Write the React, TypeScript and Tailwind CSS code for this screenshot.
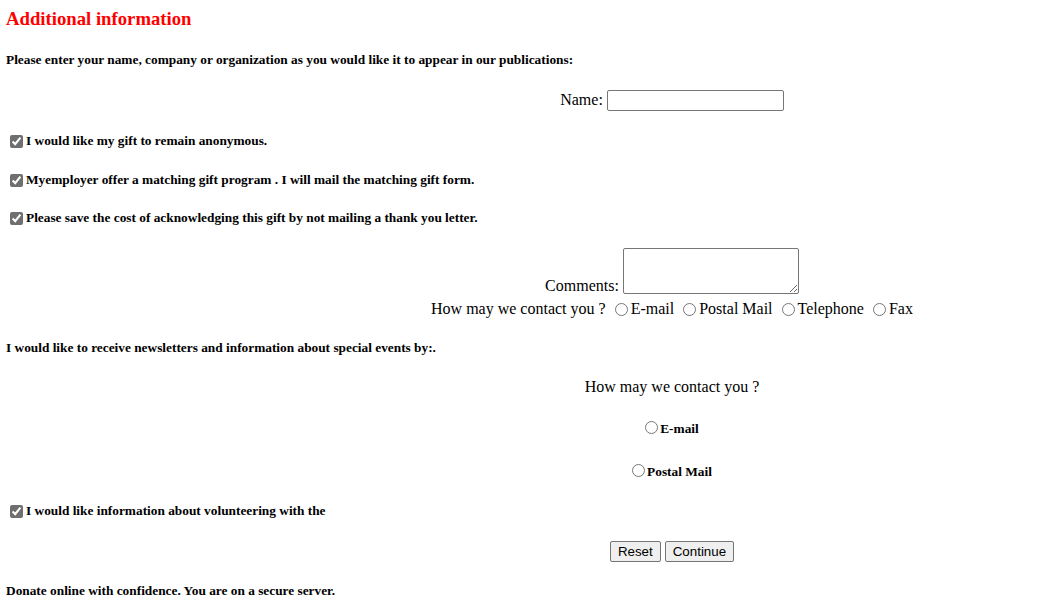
export default function App() {
  // old-school donation form, serif everywhere
  return (
    <div className="min-h-screen bg-white px-[6px] font-['Liberation_Serif','Times_New_Roman',serif] text-black">
      <div className="flex h-[38px] items-center">
        <h3 className="text-[18.72px] font-bold text-[#ff0000]">Additional information</h3>
      </div>

      <div className="flex h-[44px] items-center text-[13.33px] font-bold">
        Please enter your name, company or organization as you would like it to appear in our publications:
      </div>

      <div className="flex h-[36px] items-center justify-center pl-[293px] text-[16px]">
        <label htmlFor="name">Name:</label>
        <input
          id="name"
          type="text"
          className="ml-[4px] h-[21px] w-[177px] rounded-[2px] border border-[#767676] px-[2px] text-[13px] outline-none"
        />
      </div>

      <div className="flex h-[46px] items-center text-[13.33px] font-bold">
        <input type="checkbox" defaultChecked className="ml-[4px] mr-[3px] accent-[#6f6f6f]" />
        I would like my gift to remain anonymous.
      </div>

      <div className="flex h-[32px] items-center text-[13.33px] font-bold">
        <input type="checkbox" defaultChecked className="ml-[4px] mr-[3px] accent-[#6f6f6f]" />
        Myemployer offer a matching gift program . I will mail the matching gift form.
      </div>

      <div className="flex h-[44px] items-center text-[13.33px] font-bold">
        <input type="checkbox" defaultChecked className="ml-[4px] mr-[3px] accent-[#6f6f6f]" />
        Please save the cost of acknowledging this gift by not mailing a thank you letter.
      </div>

      <div className="flex h-[56px] items-end justify-center pb-[2px] pl-[293px] text-[16px]">
        <label htmlFor="comments" className="leading-[16px]">Comments:</label>
        <textarea
          id="comments"
          className="ml-[4px] h-[46px] w-[176px] rounded-[2px] border border-[#767676] text-[13px] outline-none"
        />
      </div>

      <div className="flex h-[26px] items-center justify-center pl-[293px] text-[16px]">
        <span>How may we contact you ?</span>
        <input type="radio" name="c1" className="ml-[9px] mr-[3px]" />
        <span>E-mail</span>
        <input type="radio" name="c1" className="ml-[9px] mr-[3px]" />
        <span>Postal Mail</span>
        <input type="radio" name="c1" className="ml-[9px] mr-[3px]" />
        <span>Telephone</span>
        <input type="radio" name="c1" className="ml-[9px] mr-[3px]" />
        <span>Fax</span>
      </div>

      <div className="flex h-[52px] items-center text-[13.33px] font-bold">
        I would like to receive newsletters and information about special events by:.
      </div>

      <div className="flex h-[26px] items-center justify-center pl-[293px] text-[16px]">
        How may we contact you ?
      </div>

      <div className="flex h-[58px] items-center justify-center pl-[293px] text-[13.33px] font-bold">
        <input type="radio" name="c2" className="mr-[2px] mb-[4px]" />
        E-mail
      </div>

      <div className="flex h-[28px] items-center justify-center pl-[293px] text-[13.33px] font-bold">
        <input type="radio" name="c2" className="mr-[2px] mb-[4px]" />
        Postal Mail
      </div>

      <div className="flex h-[50px] items-center text-[13.33px] font-bold">
        <input type="checkbox" defaultChecked className="ml-[4px] mr-[3px] accent-[#6f6f6f]" />
        I would like information about volunteering with the
      </div>

      <div className="flex h-[30px] items-center justify-center gap-[4px] pl-[293px] font-['Liberation_Sans',Arial,sans-serif] text-[13.33px]">
        <button className="h-[21px] rounded-[2px] border border-[#767676] bg-[#efefef] px-[7px]">Reset</button>
        <button className="h-[21px] rounded-[2px] border border-[#767676] bg-[#efefef] px-[7px]">Continue</button>
      </div>

      <div className="flex h-[50px] items-center text-[13.33px] font-bold">
        Donate online with confidence. You are on a secure server.
      </div>
    </div>
  );
}
